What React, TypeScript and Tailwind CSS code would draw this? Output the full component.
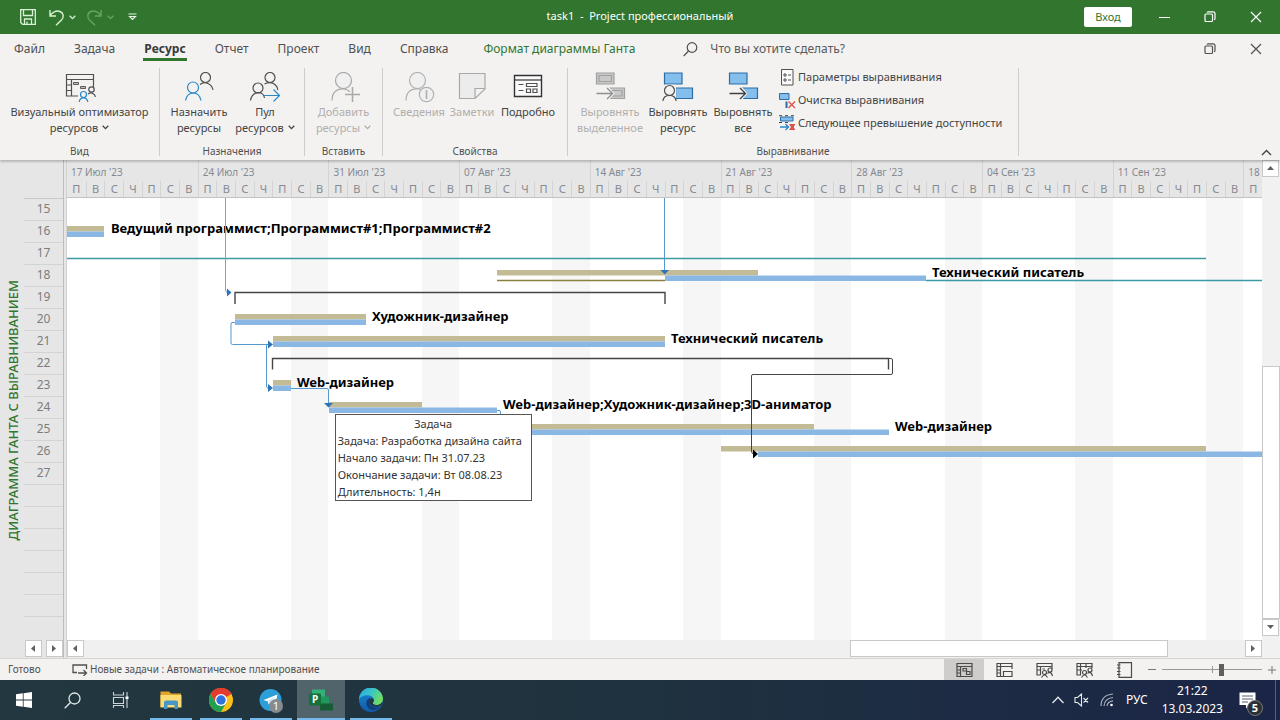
import type { ReactNode } from 'react';

const DAYS = 64;
const CHART_W = 1195;
const WEEKDAYS = ['П', 'В', 'С', 'Ч', 'П', 'С', 'В'];
const WEEKS = [
  "17 Июл '23", "24 Июл '23", "31 Июл '23", "07 Авг '23", "14 Авг '23",
  "21 Авг '23", "28 Авг '23", "04 Сен '23", "11 Сен '23", '18',
];
const ROWS = [15, 16, 17, 18, 19, 20, 21, 22, 23, 24, 25, 26, 27, 0, 0, 0, 0, 0, 0, 0];

const BARS = [
  { y: 28, plan: [0, 37], level: [0, 37] },
  { y: 72, plan: [430, 691], level: [598, 859] },
  { y: 116, plan: [168, 299], level: [168, 299] },
  { y: 138, plan: [206, 598], level: [206, 598] },
  { y: 182, plan: [206, 224], level: [206, 224] },
  { y: 204, plan: [262, 355], level: [262, 430] },
  { y: 226, plan: [436, 747], level: [436, 822] },
  { y: 248, plan: [654, 1139], level: [691, 1195] },
];

const LABELS = [
  { x: 44, y: 20, text: 'Ведущий программист;Программист#1;Программист#2' },
  { x: 865, y: 64, text: 'Технический писатель' },
  { x: 305, y: 108, text: 'Художник-дизайнер' },
  { x: 604, y: 130, text: 'Технический писатель' },
  { x: 230, y: 174, text: 'Web-дизайнер' },
  { x: 436, y: 196, text: 'Web-дизайнер;Художник-дизайнер;3D-аниматор' },
  { x: 828, y: 218, text: 'Web-дизайнер' },
];

function Chevron({ className = '' }: { className?: string }) {
  return (
    <svg className={`inline-block ${className}`} width="7" height="5" viewBox="0 0 7 5" fill="none" stroke="currentColor" strokeWidth="1.3">
      <path d="M.7.8 3.5 3.6 6.3.8" />
    </svg>
  );
}

/* ---------- ribbon icons, 32 x 32 ---------- */

function Icon({ children }: { children: ReactNode }) {
  return (
    <svg width="32" height="32" viewBox="0 0 32 32" fill="none" stroke="#505050" strokeWidth="1.2" className="block shrink-0">
      {children}
    </svg>
  );
}

function OptimizerIcon() {
  return (
    <Icon>
      <path d="M29.500 17V2.500H2.500V24H14" />
      <path d="M2.500 7.500H29.500M7.500 7.500V24M2.500 13H7.500M2.500 18.500H7.500" />
      <path d="M9.500 10.500H14.500V12.500H9.500zM16.500 14.500H21.500V16.500H16.500z" fill="#bbb" strokeWidth=".9" />
      <circle cx="27.500" cy="17.500" r="2.700" fill="#f3f2f1" />
      <path d="M24 22Q27 20 29 21.500 31 22.500 31.400 25" />
      <g stroke="#2b88c8">
        <circle cx="19.500" cy="22.500" r="3" fill="#f3f2f1" />
        <path d="M15.200 30C16 24.500 23 24.500 23.800 30" />
      </g>
    </Icon>
  );
}

function AssignIcon() {
  return (
    <Icon>
      <circle cx="22.500" cy="5.500" r="5" />
      <path d="M17 12.500C22 8.500 29 12 30 18" />
      <g stroke="#2b88c8">
        <circle cx="10" cy="15.500" r="5.500" />
        <path d="M2.500 28.500C4.500 18.500 16 18.500 18 28.500" />
      </g>
    </Icon>
  );
}

function PoolIcon() {
  return (
    <Icon>
      <circle cx="21" cy="5.500" r="5" />
      <path d="M15.500 12Q22 9 26.500 13Q28.500 15 28.700 18" />
      <circle cx="9" cy="16" r="5" />
      <path d="M1.500 28.500C3 18.500 14.500 18.500 15.500 26" />
      <path d="M15 23.500H30M24.500 17.500 30.500 23.500 24.500 29.500" stroke="#2b88c8" />
    </Icon>
  );
}

function AddResourceIcon() {
  return (
    <Icon>
      <g stroke="#a8a8a8">
        <circle cx="15.500" cy="8.500" r="8" fill="#f0f0f0" />
        <path d="M4 28.500C4 19 10 16.500 16 17Q20 17.500 22 20" />
        <path d="M24.500 15V30M17 22.500H32" strokeWidth="1.500" />
      </g>
    </Icon>
  );
}

function InfoIcon() {
  return (
    <Icon>
      <g stroke="#b0b0b0">
        <circle cx="14.500" cy="8.500" r="8" fill="#f0f0f0" />
        <path d="M3 28.500C3 19 9 16.500 15 17Q17 17.200 18.500 18" />
        <circle cx="23.500" cy="22.500" r="7.200" fill="#f0f0f0" />
        <path d="M23.500 18V27" strokeWidth="1.600" />
      </g>
    </Icon>
  );
}

function NotesIcon() {
  return (
    <Icon>
      <path d="M3.500 1.500H29V17L19 26.500H3.500zM29 16.500H19V26.500" stroke="#a8a8a8" fill="#ececec" />
    </Icon>
  );
}

function DetailsIcon() {
  return (
    <Icon>
      <path d="M2.500 3.500H29.500V24.500H2.500z" stroke="#333" strokeWidth="1.400" fill="#fafafa" />
      <path d="M2.500 8H29.500" stroke="#333" />
      <path d="M6.500 12.500H11.500M6.500 18.500H11.500M14.500 11.500H25V14.500H14.500zM14.500 17H18.500V20.500H14.500zM21 17H25V20.500H21z" />
    </Icon>
  );
}

function LevelIcon({ kind }: { kind: 'selection' | 'resource' | 'all' }) {
  const off = kind === 'selection';
  const edge = off ? '#a0a0a0' : '#2e6da4';
  const fill = off ? '#c9c9c9' : '#83beec';
  return (
    <Icon>
      <path d="M2.500 1H20V12H2.500z" fill={fill} stroke={edge} />
      {off && <path d="M5 3.500H17.500V9.500H5z" stroke={edge} />}
      <path d="M13.500 16H30.500V26.500H13.500z" fill={fill} stroke={edge} />
      {off && <path d="M18 18.500H28V24H18z" stroke={edge} />}
      {kind === 'resource' ? (
        <>
          <path d="M0 29.500V23L3 12.700H14V29.500z" fill="#f3f2f1" stroke="none" />
          <circle cx="7.500" cy="18.500" r="5" fill="#f3f2f1" />
          <path d="M.8 29C2 21.500 13 21.500 14.200 29" />
        </>
      ) : (
        <>
          <path d="M10 14H14L20.500 21.500 14 29H10z" fill="#f3f2f1" stroke="none" />
          <path d="M2.500 21.500H18.500M13 16 18.500 21.500 13 27" stroke={off ? '#8f8f8f' : '#404040'} strokeWidth="1.300" />
        </>
      )}
    </Icon>
  );
}

/* ---------- ribbon ---------- */

function Group({ title, className, children }: { title: string; className: string; children: ReactNode }) {
  return (
    <section className={`flex shrink-0 flex-col border-r border-[#cfcdcb] ${className}`}>
      <div className="flex flex-1 justify-center">{children}</div>
      <h2 className="text-center text-[10px] leading-[10px] text-[#505050]">{title}</h2>
    </section>
  );
}

function BigButton({ icon, lines, menu, disabled, className }: { icon: ReactNode; lines: string[]; menu?: boolean; disabled?: boolean; className: string }) {
  return (
    <button disabled={disabled} className={`flex shrink-0 flex-col items-center pt-1 text-[11px] leading-4 whitespace-nowrap ${disabled ? 'text-[#b1afad]' : 'text-[#444]'} ${className}`}>
      {icon}
      {lines.map((line, i) => (
        <span key={line}>
          {line}
          {menu && i === lines.length - 1 && <Chevron className="mb-1 ml-1" />}
        </span>
      ))}
    </button>
  );
}

function SmallIcon({ children }: { children: ReactNode }) {
  return <svg width="17" height="17" viewBox="0 0 17 17" fill="none" strokeWidth="1" className="shrink-0">{children}</svg>;
}

function Ribbon() {
  return (
    <div className="relative flex h-24 shrink-0 overflow-hidden pt-1 pb-1 shadow-[0_2px_2px_rgba(0,0,0,0.2)]">
      <Group title="Вид" className="w-40">
        <BigButton className="w-40" icon={<OptimizerIcon />} lines={['Визуальный оптимизатор', 'ресурсов']} menu />
      </Group>
      <Group title="Назначения" className="w-[145px]">
        <BigButton className="w-[66px]" icon={<AssignIcon />} lines={['Назначить', 'ресурсы']} />
        <BigButton className="w-[66px]" icon={<PoolIcon />} lines={['Пул', 'ресурсов']} menu />
      </Group>
      <Group title="Вставить" className="w-[78px]">
        <BigButton className="w-16" icon={<AddResourceIcon />} lines={['Добавить', 'ресурсы']} menu disabled />
      </Group>
      <Group title="Свойства" className="w-[185px]">
        <BigButton className="w-[54px]" icon={<InfoIcon />} lines={['Сведения']} disabled />
        <BigButton className="w-[52px]" icon={<NotesIcon />} lines={['Заметки']} disabled />
        <BigButton className="w-[60px]" icon={<DetailsIcon />} lines={['Подробно']} />
      </Group>
      <Group title="Выравнивание" className="w-[451px]">
        <BigButton className="w-[70px]" icon={<LevelIcon kind="selection" />} lines={['Выровнять', 'выделенное']} disabled />
        <BigButton className="w-[66px]" icon={<LevelIcon kind="resource" />} lines={['Выровнять', 'ресурс']} />
        <BigButton className="w-16" icon={<LevelIcon kind="all" />} lines={['Выровнять', 'все']} />
        <div className="flex w-[236px] flex-col pl-1 text-[11px] whitespace-nowrap text-[#444]">
          <button className="flex h-[23px] items-center gap-[2px] pb-1">
            <SmallIcon>
              <path d="M2.500.5H14V16H2.500z" stroke="#505050" fill="#fafafa" />
              <path d="M5 5H7V7H5zM5 10H7V12H5zM9 6H12M9 11H12" stroke="#505050" />
            </SmallIcon>
            Параметры выравнивания
          </button>
          <button className="flex h-[23px] items-center gap-[2px] pb-1">
            <SmallIcon>
              <path d="M.5 1.500H10V7.500H.5z" fill="#83beec" stroke="#2e6da4" />
              <path d="M7.500 9.500V16" stroke="#2e6da4" strokeWidth="2" />
              <path d="M9.500 9.500 16 16M16 9.500 9.500 16" stroke="#d9534a" strokeWidth="1.300" />
            </SmallIcon>
            Очистка выравнивания
          </button>
          <button className="flex h-[23px] items-center gap-[2px] pb-1">
            <SmallIcon>
              <path d="M1.500 2H14V6H1.500z" fill="#83beec" stroke="#2e6da4" />
              <path d="M0 .7H3M6 .7H9M12 .7H15M0 7.500H3M6 7.500H9" stroke="#444" />
              <path d="M10 9H16V10.500H15V13.500H16V15H10L12 12z" fill="#d9534a" />
              <path d="M1 12H9.500M6.500 9 9.500 12 6.500 15" stroke="#2b88c8" strokeWidth="1.400" />
            </SmallIcon>
            Следующее превышение доступности
          </button>
        </div>
      </Group>
      <button aria-label="Свернуть ленту" className="mt-auto mr-2 ml-auto text-[#444]">
        <svg width="11" height="7" viewBox="0 0 11 7" fill="none" stroke="currentColor" strokeWidth="1.400"><path d="M1 6 5.500 1.500 10 6" /></svg>
      </button>
    </div>
  );
}

/* ---------- window chrome ---------- */

function RestoreGlyph() {
  return (
    <svg width="12" height="12" viewBox="0 0 12 12" fill="none" stroke="currentColor" strokeWidth="1.200">
      <rect x="1" y="3" width="7.500" height="7.500" rx="1" />
      <path d="M3 1.500Q3.300.8 4.300.8H9Q11 .8 11 2.800V7.500Q11 8.700 10 8.700" />
    </svg>
  );
}

function CloseGlyph() {
  return <svg width="12" height="12" viewBox="0 0 12 12" fill="none" stroke="currentColor" strokeWidth="1.200"><path d="M1 1 11 11M11 1 1 11" /></svg>;
}

function TitleBar() {
  return (
    <header className="grid h-[34px] shrink-0 grid-cols-[1fr_auto_1fr] items-center bg-[#31752f] text-white">
      <div className="flex items-center pl-5">
        <button aria-label="Сохранить">
          <svg width="16" height="16" viewBox="0 0 16 16" fill="none" stroke="#d8f2d4" strokeWidth="1.300">
            <path d="M.7.7H15.300V15.300H2.500L.7 13.500zM3.500 1V6.500H12.500V1M4.500 15V10H11.500V15M7 12.500V15" />
          </svg>
        </button>
        <button aria-label="Отменить" className="ml-3 flex items-center gap-1 text-[#d8f2d4]">
          <svg width="17" height="17" viewBox="0 0 17 17" fill="none" stroke="currentColor" strokeWidth="1.400">
            <path d="M2 1V7H8M2.200 6.500C4 3.500 8 1 12 2.500C16 4.200 16 8.500 13.500 11L8 16.300" />
          </svg>
          <Chevron />
        </button>
        <button aria-label="Вернуть" className="ml-2.5 flex items-center gap-1 text-[#68a463]">
          <svg width="17" height="17" viewBox="0 0 17 17" fill="none" stroke="currentColor" strokeWidth="1.400">
            <path d="M15 1V7H9M14.800 6.500C13 3.500 9 1 5 2.500C1 4.200 1 8.500 3.500 11L9 16.300" />
          </svg>
          <Chevron />
        </button>
        <button aria-label="Настройка панели" className="ml-3.5">
          <svg width="9" height="8" viewBox="0 0 9 8" fill="none" stroke="#e6f6e3" strokeWidth="1.100"><path d="M.5 1H8.500M1.500 3.500H7.500L4.500 6.500z" /></svg>
        </button>
      </div>
      <h1 className="pb-0.5 text-[11px] whitespace-pre">task1  -  Project профессиональный</h1>
      <div className="flex items-center justify-end pr-[18px]">
        <button className="mr-[27px] h-5 w-12 rounded-xs bg-white text-[11px] leading-5 text-[#31752f]">Вход</button>
        <button aria-label="Свернуть" className="flex h-3 w-[11px] items-center"><span className="h-px w-full bg-white" /></button>
        <button aria-label="Восстановить" className="ml-[34px]"><RestoreGlyph /></button>
        <button aria-label="Закрыть" className="ml-[34px]"><CloseGlyph /></button>
      </div>
    </header>
  );
}

function Tabs() {
  return (
    <nav className="flex h-[30px] shrink-0 items-center pr-[18px] pl-3.5 text-xs whitespace-nowrap text-[#505050]">
      <div className="flex gap-[29px]">
        <a href="#file">Файл</a>
        <a href="#task">Задача</a>
        <a href="#resource" className="relative font-bold text-[#3a3a3a]">
          Ресурс
          <span className="absolute -inset-x-px -bottom-1 h-[3px] bg-[#31752f]" />
        </a>
        <a href="#report">Отчет</a>
        <a href="#project">Проект</a>
        <a href="#view">Вид</a>
        <a href="#help">Справка</a>
      </div>
      <a href="#format" className="ml-[35px] text-[#31752f]">Формат диаграммы Ганта</a>
      <label className="ml-12 flex flex-1 items-center gap-3">
        <svg width="15" height="15" viewBox="0 0 15 15" fill="none" stroke="#505050" strokeWidth="1.200"><circle cx="9" cy="5.500" r="4.800" /><path d="M5.500 9 .7 14" /></svg>
        <input aria-label="Поиск" placeholder="Что вы хотите сделать?" className="w-52 bg-transparent outline-none placeholder:text-[#5a5a5a]" />
      </label>
      <button aria-label="Восстановить документ"><RestoreGlyph /></button>
      <button aria-label="Закрыть документ" className="ml-[34px]"><CloseGlyph /></button>
    </nav>
  );
}

/* ---------- gantt ---------- */

function Timeline() {
  return (
    <div className="h-[38px] shrink-0 border-b border-[#c2c2c2] bg-[#e6e6e6] text-[#858a92]">
      <div className="grid h-[21px] grid-cols-[repeat(64,minmax(0,1fr))] text-[10px]">
        {WEEKS.map((week, i) => (
          <div key={week} className={`overflow-hidden pt-1 pl-1 leading-4 whitespace-nowrap ${i ? 'border-l border-[#d4d4d4]' : ''} ${i === 9 ? 'col-span-1' : 'col-span-7'}`}>
            {week}
          </div>
        ))}
      </div>
      <div className="grid h-4 grid-cols-[repeat(64,minmax(0,1fr))] text-[11px]">
        {Array.from({ length: DAYS }, (_, i) => (
          <span key={i} className={`text-center leading-[15px] ${i ? 'border-l border-[#d4d4d4]' : ''}`}>{WEEKDAYS[i % 7]}</span>
        ))}
      </div>
    </div>
  );
}

function Chart() {
  return (
    <div className="relative min-h-0 flex-1 overflow-hidden bg-white">
      <div className="absolute inset-0 grid grid-cols-[repeat(64,minmax(0,1fr))]">
        {Array.from({ length: DAYS }, (_, i) => (
          <span key={i} className={i % 7 > 4 ? 'bg-[#f6f6f6]' : ''} />
        ))}
      </div>
      {LABELS.map((l) => (
        <span key={l.y} className="absolute text-[13px] leading-5 font-bold whitespace-nowrap text-black" style={{ left: `${(l.x / CHART_W) * 100}%`, top: l.y }}>
          {l.text}
        </span>
      ))}
      <svg className="absolute inset-x-0 top-0 h-[442px] w-full" viewBox="0 0 1195 442" preserveAspectRatio="none" fill="none">
        <path d="M0 60.500H1139" stroke="#3c9aa5" strokeWidth="1.300" />
        <path d="M859 82.500H1195" stroke="#3c9aa5" strokeWidth="1.300" />
        <path d="M430 82.500H598" stroke="#8a8140" strokeWidth="1.300" />
        {BARS.map((b) => (
          <g key={b.y}>
            <rect x={b.plan[0]} y={b.y} width={b.plan[1] - b.plan[0]} height="5.500" fill="#c3bb96" />
            <rect x={b.level[0]} y={b.y + 5.5} width={b.level[1] - b.level[0]} height="5.500" fill="#8ab7e4" />
          </g>
        ))}
        <g stroke="#454545">
          <path d="M168 106V94.500H598V106" strokeWidth="1.400" />
          <path d="M205.500 171.500V160.500H821.500V171.500" strokeWidth="1.400" />
          <path d="M822 160.500H824Q825.500 160.500 825.500 162V175Q825.500 176.500 824 176.500H686Q684.500 176.500 684.500 178V253Q684.500 256 687 256" strokeWidth="1" />
        </g>
        <path d="M158.500 0V92Q158.500 94.500 161 94.500" stroke="#6aa9dc" />
        <path d="M597.500 0V73M168 124.500H165Q164 124.500 164 126V145Q164 146.500 165.500 146.500H201M199.500 147V188Q199.500 190 201 190M224 190.500H260Q261.500 190.500 261.500 192V205M430 212.500H432Q433.500 212.500 433.500 214V226" stroke="#5599d0" />
        <path d="M160 90.500 164.500 94.500 160 98.500zM593.500 72H602L597.700 76.500zM201 142.500 206 146.500 201 150.500zM201 186 206 190 201 194zM257 205H266L261.500 209.500z" fill="#2e75b6" />
        <path d="M686 251.500 691 256 686 260.500z" fill="#000" />
      </svg>
      <div role="tooltip" className="absolute top-[216px] left-[22.4%] w-[197px] border border-[#555] bg-white px-0.5 text-[11px] leading-[17px] whitespace-nowrap text-[#333]">
        <p className="text-center">Задача</p>
        <p>Задача: Разработка дизайна сайта</p>
        <p>Начало задачи: Пн 31.07.23</p>
        <p>Окончание задачи: Вт 08.08.23</p>
        <p>Длительность: 1,4н</p>
      </div>
    </div>
  );
}

const ARROWS = { up: 'M0 5H7L3.500 1z', down: 'M0 1H7L3.500 5z', left: 'M5 0V7L1 3.500z', right: 'M1 0V7L5 3.500z' };

function ScrollButton({ dir, label, className = '' }: { dir: keyof typeof ARROWS; label: string; className?: string }) {
  return (
    <button aria-label={label} className={`flex h-[17px] w-[17px] shrink-0 items-center justify-center border border-[#c8c8c8] bg-white ${className}`}>
      <svg width="7" height="7" viewBox="0 0 7 7" fill="#606060"><path d={ARROWS[dir]} /></svg>
    </button>
  );
}

function Workspace() {
  return (
    <main className="flex min-h-0 flex-1 bg-[#e6e6e6]">
      <div className="flex w-[67px] shrink-0 flex-col border-r border-[#d2d2d2]">
        <div className="mr-0.5 flex min-h-0 flex-1 border-r border-[#bdbdbd]">
          <div className="flex w-6 items-center justify-center pt-5 pl-1">
            <span className="rotate-180 text-[13px] font-medium whitespace-nowrap text-[#31752f] [writing-mode:vertical-rl]">ДИАГРАММА ГАНТА С ВЫРАВНИВАНИЕМ</span>
          </div>
          <ol className="min-w-0 flex-1 overflow-hidden pt-[38px] text-center text-xs text-[#7d7d7d]">
            {ROWS.map((n, i) => (
              <li key={i} className={`h-[22px] border-t leading-5 ${i ? 'border-[#d3d3d3]' : 'border-[#c8c8c8]'}`}>{n || ''}</li>
            ))}
          </ol>
        </div>
        <div className="mr-0.5 flex h-[18px] shrink-0 gap-1 border-r border-[#bdbdbd] pl-[25px]">
          <ScrollButton dir="left" label="Таблица влево" />
          <ScrollButton dir="right" label="Таблица вправо" />
        </div>
      </div>
      <div className="flex min-w-0 flex-1 flex-col">
        <Timeline />
        <Chart />
        <div className="flex h-[18px] shrink-0 bg-[#f0f0f0]">
          <ScrollButton dir="left" label="Диаграмма влево" />
          <div className="flex flex-1">
            <div className="ml-[66%] h-[17px] w-[27.400%] border border-[#c8c8c8] bg-white" />
          </div>
          <ScrollButton dir="right" label="Диаграмма вправо" />
        </div>
      </div>
      <div className="flex w-[18px] shrink-0 flex-col bg-[#f1f1f1]">
        <ScrollButton dir="up" label="Вверх" />
        <div className="flex flex-1 flex-col">
          <div className="flex-[190]" />
          <div className="flex-[252] border border-[#c8c8c8] bg-white" />
        </div>
        <ScrollButton dir="down" label="Вниз" />
        <div className="h-[22px]" />
      </div>
    </main>
  );
}

/* ---------- status bar ---------- */

const VIEW_ICONS = [
  { label: 'Диаграмма Ганта', d: 'M1 1.500H16V14.500H1zM1 4.500H16M4.500 4.500V14.500M1 8H4.500M1 11H4.500M7 6.500H10.500V9H7zM10.500 9.500H14V12.500H10.500z' },
  { label: 'Использование задач', d: 'M16 7V1.500H1V14.500H7M1 4.500H16M4.500 1.500V14.500M1 8H4.500M1 11H4.500M7.500 9.500H16V14.500H7.500z' },
  { label: 'Визуальный оптимизатор', d: 'M16 7V1.500H1V13H4.500M1 4.500H16M4.500 4.500V13M1 8H4.500M6.500 7H9M14 6A2 2 0 1 1 14 10A2 2 0 1 1 14 6M8.500 8.500A2 2 0 1 1 8.500 12.500A2 2 0 1 1 8.500 8.500M5.500 15.500Q8.500 10.500 11.500 15.500M11.500 11.500Q15 8.500 16.500 14' },
  { label: 'Лист ресурсов', d: 'M16 6V1.500H1V13H5M1 4.500H16M4.500 1.500V13M10 1.500V6M1 8H6M14 6A2 2 0 1 1 14 10A2 2 0 1 1 14 6M8.500 8.500A2 2 0 1 1 8.500 12.500A2 2 0 1 1 8.500 8.500M5.500 15.500Q8.500 10.500 11.500 15.500M11.500 11.500Q15 8.500 16.500 14' },
  { label: 'Отчет', d: 'M3 .7H15.500V15.300H3zM1 3H4.500M1 6H4.500M1 9.500H4.500M1 12.500H4.500' },
];

function StatusBar() {
  return (
    <footer className="flex h-[22px] shrink-0 items-stretch border-t border-[#d6d4d2] bg-[#f3f2f1] text-[10px] text-[#505050]">
      <span className="w-[72px] self-center pl-2">Готово</span>
      <button className="flex items-center gap-0.5">
        <svg width="16" height="13" viewBox="0 0 16 13" fill="none" stroke="#505050" strokeWidth="1.300"><path d="M5 9.500H1V2H14.500V6M6 10H14.500M11.500 7 14.500 10 11.500 13" /></svg>
        Новые задачи : Автоматическое планирование
      </button>
      <div className="ml-auto flex">
        {VIEW_ICONS.map((v, i) => (
          <button key={v.label} aria-label={v.label} className={`flex w-10 items-center justify-center ${i === 0 ? 'bg-[#cfcdcb]' : ''}`}>
            <svg width="17" height="16" viewBox="0 0 17 16" fill="none" stroke="#4a4a4a" strokeWidth="1.200"><path d={v.d} /></svg>
          </button>
        ))}
      </div>
      <div className="flex items-center gap-1.5 pl-1">
        <button aria-label="Мельче" className="flex h-4 w-2 items-center"><span className="h-px w-full bg-[#777]" /></button>
        <input
          type="range"
          aria-label="Масштаб"
          defaultValue={60}
          className="h-4 w-[100px] appearance-none bg-[linear-gradient(#999,#999),linear-gradient(#999,#999)] bg-[size:100%_1px,1px_7px] bg-[position:center,center] bg-no-repeat [&::-webkit-slider-thumb]:h-3 [&::-webkit-slider-thumb]:w-[5px] [&::-webkit-slider-thumb]:appearance-none [&::-webkit-slider-thumb]:bg-[#5f5f5f]"
        />
        <button aria-label="Крупнее" className="mr-1 w-2">
          <svg width="8" height="8" viewBox="0 0 8 8" fill="none" stroke="#777"><path d="M0 4H8M4 0V8" /></svg>
        </button>
      </div>
    </footer>
  );
}

/* ---------- taskbar ---------- */

function ExplorerLogo() {
  return (
    <svg width="24" height="24" viewBox="0 0 24 24">
      <path d="M1.500 3.500H10L12 5.500H22V19H1.500z" fill="#e0a526" />
      <path d="M1.500 7H22.500V19.500H1.500z" fill="#fbdc74" />
      <path d="M5 21V14.500Q5 12.500 7 12.500H17Q19 12.500 19 14.500V21H15.500V17H8.500V21z" fill="#4696c8" />
    </svg>
  );
}

function ChromeLogo() {
  return (
    <svg width="24" height="24" viewBox="0 0 24 24">
      <circle cx="12" cy="12" r="12" fill="#fbc116" />
      <path d="M12 12 1.600 6A12 12 0 0 1 22.400 6z" fill="#e33b2e" />
      <path d="M12 6H22.400A12 12 0 0 0 1.600 6L6.800 15z" fill="#e33b2e" />
      <path d="M1.600 6A12 12 0 0 0 12 24L17.200 15 12 18 6.800 15z" fill="#22a052" />
      <circle cx="12" cy="12" r="6" fill="#fff" />
      <circle cx="12" cy="12" r="4.700" fill="#2f72e0" />
    </svg>
  );
}

function TelegramLogo() {
  return (
    <svg width="24" height="24" viewBox="0 0 24 24">
      <circle cx="11.500" cy="12" r="11" fill="#2d9fd8" />
      <path d="M4.500 12 18.500 6.500 16 17.500 11.500 14.500 9.500 16.500 9 13.500z" fill="#fff" />
      <path d="M9 13.500 16 8.500 10.500 14z" fill="#a9cfe8" />
    </svg>
  );
}

function ProjectLogo() {
  return (
    <svg width="26" height="24" viewBox="0 0 26 24">
      <path d="M4 1.500H17V9H4z" fill="#34b079" />
      <path d="M8 8.500H21V16H8z" fill="#219760" />
      <path d="M12 15.500H25V22.500H12z" fill="#165c34" />
      <rect x="1" y="5.500" width="12" height="12" rx="1" fill="#15713a" />
      <text x="7" y="15" textAnchor="middle" fontSize="10" fontWeight="700" fill="#fff">P</text>
    </svg>
  );
}

function EdgeLogo() {
  return (
    <svg width="24" height="24" viewBox="0 0 24 24">
      <defs>
        <linearGradient id="edge-top" x1="0" y1="0" x2="1" y2=".4"><stop offset="0" stopColor="#2aa7e0" /><stop offset=".55" stopColor="#38c6c8" /><stop offset="1" stopColor="#6fdc62" /></linearGradient>
        <linearGradient id="edge-low" x1="0" y1="0" x2="0" y2="1"><stop offset="0" stopColor="#1a8ad6" /><stop offset="1" stopColor="#1159a8" /></linearGradient>
      </defs>
      <circle cx="12" cy="12" r="12" fill="url(#edge-low)" />
      <path d="M0 12A12 12 0 0 1 24 11C24 15 21 17 17.500 17C15 17 13.800 16 13.800 15C13.800 14.300 15 14 15 12.200C15 9.500 12 7.300 8.500 7.300C4 7.300.5 9.500 0 12z" fill="url(#edge-top)" />
      <path d="M9 11C5 15 8 21 13.500 22Q18 22.500 22 18.500C16 21 11 18.500 10.500 14Q10.300 12 12 10.500Q10.500 9.700 9 11z" fill="#123f78" />
      <path d="M12 10.500Q10 12 10.500 14.500C11.500 18.500 17 20 22.500 17.500L24 12Q22 17.500 17 17 13.500 16.500 13.800 14.800 15.500 13 14.500 11 13.500 10 12 10.500z" fill="#22373f" />
    </svg>
  );
}

function TaskButton({ label, running, active, children }: { label: string; running?: boolean; active?: boolean; children: ReactNode }) {
  return (
    <button aria-label={label} className={`relative flex h-10 w-12 items-center justify-center ${active ? 'bg-[#51636b]' : ''}`}>
      {children}
      {running && <span className={`absolute bottom-0 h-0.5 bg-[#76b9ed] ${active ? 'inset-x-0' : 'inset-x-[3px]'}`} />}
    </button>
  );
}

function Taskbar() {
  return (
    <div className="flex h-10 shrink-0 items-center bg-linear-to-r from-[#22373f] via-[#1f323f] to-[#1b2547] text-white">
      <TaskButton label="Пуск">
        <svg width="16" height="16" viewBox="0 0 16 16" fill="#fff"><path d="M0 2.300 6.800 1.300V7.600H0zM7.600 1.200 16 0V7.600H7.600zM0 8.400H6.800V14.700L0 13.700zM7.600 8.400H16V16L7.600 14.800z" /></svg>
      </TaskButton>
      <TaskButton label="Поиск">
        <svg width="17" height="17" viewBox="0 0 17 17" fill="none" stroke="#e4e9ec" strokeWidth="1.300"><circle cx="10.500" cy="6.500" r="5.500" /><path d="M6.500 10.500.7 16.300" /></svg>
      </TaskButton>
      <TaskButton label="Представление задач">
        <svg width="17" height="16" viewBox="0 0 17 16" fill="none" stroke="#cdd5d9" strokeWidth="1.100"><path d="M1.500 0V3H11.500V0M1.500 16V13.500H11.500V16M1.500 5.500H11.500V11.500H1.500zM15 0V16" /><path d="M13.500 4.500H16.500V7H13.500z" fill="#fff" stroke="none" /></svg>
      </TaskButton>
      <div className="ml-[3px] flex gap-0.5">
        <TaskButton label="Проводник" running><ExplorerLogo /></TaskButton>
        <TaskButton label="Chrome" running><ChromeLogo /></TaskButton>
        <TaskButton label="Telegram" running>
          <TelegramLogo />
          <span className="absolute top-[19px] left-[22px] h-3.5 w-3.5 rounded-full bg-[#858b8f] text-[11px] leading-[14px]">1</span>
        </TaskButton>
        <TaskButton label="Project" running active><ProjectLogo /></TaskButton>
        <TaskButton label="Edge" running><EdgeLogo /></TaskButton>
      </div>
      <div className="ml-auto flex h-full items-center">
        <button aria-label="Скрытые значки">
          <svg width="12" height="8" viewBox="0 0 12 8" fill="none" stroke="#e4e9ec" strokeWidth="1.300"><path d="M.5 7 6 1.300 11.500 7" /></svg>
        </button>
        <button aria-label="Звук" className="ml-2.5">
          <svg width="15" height="14" viewBox="0 0 15 14" fill="none" stroke="#e4e9ec" strokeWidth="1.100"><path d="M1 4.500H3.500L7.500 1V13L3.500 9.500H1zM9.500 5 14 9.500M14 5 9.500 9.500" /></svg>
        </button>
        <button aria-label="Сеть" className="ml-[11px]">
          <svg width="14" height="14" viewBox="0 0 14 14" fill="none" strokeWidth="1.200"><path d="M1 13Q1 2 13 1M4 13Q4.500 5.500 13 4.500M7 13Q7.500 8.500 13 7.800" stroke="#a6b0ba" /><circle cx="11.500" cy="12" r="1.300" fill="#fff" /></svg>
        </button>
        <button className="ml-3 text-xs">РУС</button>
        <button className="ml-3.5 text-center text-xs leading-[18px]">21:22<br />13.03.2023</button>
        <button aria-label="Уведомления" className="relative ml-4 h-10 w-[26px]">
          <svg className="absolute top-3 left-0" width="17" height="17" viewBox="0 0 17 17" fill="none"><path d="M.5.5H16.500V13H10L7 16.500V13H.5z" fill="#fff" /><path d="M3 4H14M3 7H14M3 10H9" stroke="#56616d" /></svg>
          <span className="absolute top-5 left-2 h-4 w-4 rounded-full border border-[#777] bg-[#2b2f36] text-[11px] leading-[14px] font-bold">5</span>
        </button>
        <span className="mr-1 ml-2.5 h-full w-px bg-[#56607a]" />
      </div>
    </div>
  );
}

export default function App() {
  return (
    <div className="flex h-screen flex-col overflow-hidden bg-[#f3f2f1] font-['Noto_Sans','Open_Sans',sans-serif]">
      <TitleBar />
      <Tabs />
      <Ribbon />
      <Workspace />
      <StatusBar />
      <Taskbar />
    </div>
  );
}
